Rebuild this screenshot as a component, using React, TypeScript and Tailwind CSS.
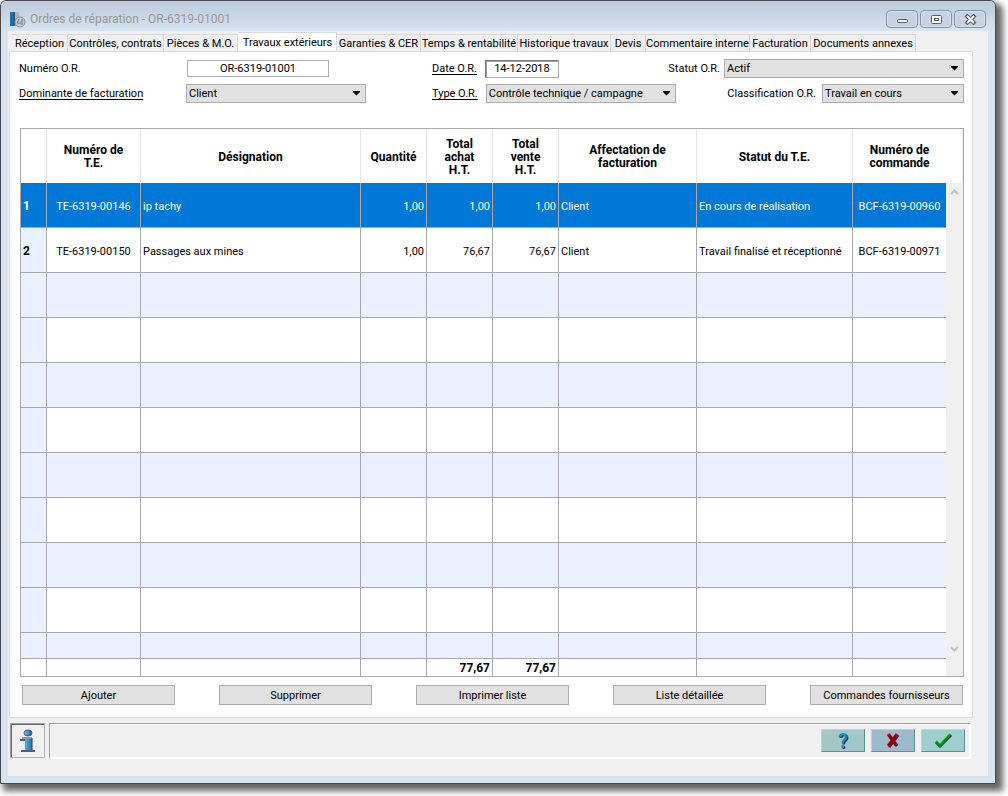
import type { ReactNode } from 'react';
import { clsx } from 'clsx';

const tabs = [
  { name: 'Réception', width: 'w-14' },
  { name: 'Contrôles, contrats', width: 'w-24' },
  { name: 'Pièces & M.O.', width: 'w-[74px]' },
  { name: 'Travaux extérieurs', width: 'w-[99px]', active: true },
  { name: 'Garanties & CER', width: 'w-[84px]' },
  { name: 'Temps & rentabilité', width: 'w-[97px]' },
  { name: 'Historique travaux', width: 'w-[93px]' },
  { name: 'Devis', width: 'w-[35px]' },
  { name: 'Commentaire interne', width: 'w-[104px]' },
  { name: 'Facturation', width: 'w-[61px]' },
  { name: 'Documents annexes', width: 'w-[105px]' },
];

const columns = [
  { label: '', width: 'w-[26px]' },
  { label: 'Numéro de T.E.', width: 'w-[94px]' },
  { label: 'Désignation', width: '' },
  { label: 'Quantité', width: 'w-[66px]' },
  { label: 'Total achat H.T.', width: 'w-[66px]' },
  { label: 'Total vente H.T.', width: 'w-[66px]' },
  { label: 'Affectation de facturation', width: 'w-[138px]' },
  { label: 'Statut du T.E.', width: 'w-[156px]' },
  { label: 'Numéro de commande', width: 'w-[93px]' },
];

const rows = [
  ['1', 'TE-6319-00146', 'ip tachy', '1,00', '1,00', '1,00', 'Client', 'En cours de réalisation', 'BCF-6319-00960'],
  ['2', 'TE-6319-00150', 'Passages aux mines', '1,00', '76,67', '76,67', 'Client', 'Travail finalisé et réceptionné', 'BCF-6319-00971'],
  ...Array.from({ length: 9 }, () => Array(9).fill('')),
];

const totals = ['', '', '', '', '77,67', '77,67', '', '', ''];

const align = [
  'text-left font-bold text-xs',
  'text-center',
  'text-left',
  'text-right',
  'text-right',
  'text-right',
  'text-left',
  'text-left',
  'text-center',
];

const actions = ['Ajouter', 'Supprimer', 'Imprimer liste', 'Liste détaillée', 'Commandes fournisseurs'];

function AppIcon() {
  return (
    <svg width="17" height="17" viewBox="0 0 17 17">
      <path d="M1 1h9l1 14H1z" fill="#a9b3bb" />
      <path d="M1 1h3v14H1z" fill="#1f6fb5" />
      <path d="M4 1h2v14H4z" fill="#3f5364" />
      <circle cx="11" cy="11" r="5" fill="#c3c9ce" stroke="#868b90" />
      <path d="M10 8l-2 4h4M13 8v6" fill="none" stroke="#72777c" />
    </svg>
  );
}

function InfoIcon() {
  return (
    <svg width="16" height="24" viewBox="0 0 16 24">
      <defs>
        <linearGradient id="info" x1="0" y1="0" x2="1" y2="0">
          <stop offset="0" stopColor="#8cc8e4" />
          <stop offset="0.5" stopColor="#3f97c9" />
          <stop offset="1" stopColor="#1b5f96" />
        </linearGradient>
      </defs>
      <ellipse cx="8" cy="4" rx="4" ry="3" fill="url(#info)" stroke="#3a4f82" />
      <path d="M1 10h11v11h3v2H1v-2h4v-9H1z" fill="url(#info)" />
      <path d="M0 11h5M1 22h14" stroke="#56598f" strokeWidth="2" />
      <path d="M2 9h10v12" fill="none" stroke="#23405f" />
    </svg>
  );
}

function CrossIcon() {
  return (
    <svg width="16" height="17" viewBox="0 0 16 17" fill="none">
      <path d="M4 3l8 11M13 3L4 15" stroke="#14147a" strokeWidth="3" />
      <path d="M3 2l8 11M12 2L3 14" stroke="#e01010" strokeWidth="3" />
      <path d="M4 3l7 10M12 3L4 14" stroke="#8f0000" strokeWidth="3" />
    </svg>
  );
}

function CheckIcon() {
  return (
    <svg width="18" height="17" viewBox="0 0 18 17" fill="none">
      <path d="M2 10l4 4L17 3" stroke="#10107a" strokeWidth="3" />
      <path d="M2 9l4 4L16 2" stroke="#12d012" strokeWidth="2" />
      <path d="M2 10l4 4L16 3" stroke="#009600" strokeWidth="2" />
    </svg>
  );
}

function WindowButton({ label, children }: { label: string; children: ReactNode }) {
  return (
    <button aria-label={label} className="flex h-[18px] w-8 items-center justify-center rounded-sm border border-[#8593ab] bg-[#c5d3e2] shadow-[inset_0_0_0_1px_#d5e0ec]">
      <svg width="13" height="11" viewBox="0 0 13 11" fill="none">
        {children}
      </svg>
    </button>
  );
}

function Select({ id, value, className }: { id: string; value: string; className: string }) {
  return (
    <div className={clsx('relative h-[19px]', className)}>
      <select id={id} defaultValue={value} className="h-full w-full appearance-none border border-[#adadad] bg-[#e1e1e1] pl-0.5 pr-5">
        <option>{value}</option>
      </select>
      <svg className="pointer-events-none absolute right-[5px] top-[7px]" width="9" height="5" viewBox="0 0 9 5">
        <path d="M1 0h7v1L4.500 4.500L1 1z" fill="#000" />
      </svg>
    </div>
  );
}

function Field({ id, label, underline, className, children }: {
  id: string;
  label: string;
  underline?: boolean;
  className?: string;
  children: ReactNode;
}) {
  return (
    <div className={clsx('flex h-[19px] items-center', className)}>
      <label htmlFor={id} className={clsx('whitespace-nowrap', underline && 'underline underline-offset-2')}>{label}</label>
      {children}
    </div>
  );
}

function OrderForm() {
  return (
    <div className="grid grid-cols-[347px_1fr_240px] gap-y-1.5 pl-[9px]">
      <Field id="numero" label="Numéro O.R." className="justify-between pr-[37px]">
        <input id="numero" defaultValue="OR-6319-01001" className="h-[17px] w-[142px] border border-[#adadad] bg-white text-center" />
      </Field>
      <div className="flex justify-between">
        <Field id="date" label="Date O.R." underline className="gap-2 pl-[66px]">
          <input id="date" defaultValue="14-12-2018" className="h-[18px] w-[74px] border border-[#adadad] border-l-[#7a7a7a] border-t-[#7a7a7a] bg-white text-center shadow-[inset_1px_1px_0_#a0a0a0]" />
        </Field>
        <label htmlFor="statut" className="flex items-center pr-1">Statut O.R.</label>
      </div>
      <Select id="statut" value="Actif" className="w-full" />
      <Field id="dominante" label="Dominante de facturation" underline className="justify-between">
        <Select id="dominante" value="Client" className="w-[180px]" />
      </Field>
      <Field id="type" label="Type O.R." underline className="gap-2 pl-[66px]">
        <Select id="type" value="Contrôle technique / campagne" className="w-[190px]" />
      </Field>
      <Field id="classification" label="Classification O.R." className="justify-end gap-1.5">
        <Select id="classification" value="Travail en cours" className="w-[142px]" />
      </Field>
    </div>
  );
}

function WorksTable() {
  return (
    <div className="ml-2.5 flex border border-[#a9a9ad] bg-white">
      <div className="min-w-0 flex-1">
        <table className="w-full table-fixed border-separate border-spacing-0">
          <thead>
            <tr className="h-[54px]">
              {columns.map((col, i) => (
                <th
                  key={i}
                  className={clsx('border-[#e3e3e3] px-2 pt-0.5 pb-0 text-xs leading-[13px] font-bold', col.width, i < 8 && 'border-r')}
                >
                  {col.label}
                </th>
              ))}
            </tr>
          </thead>
          <tbody>
            {rows.map((row, r) => (
              <tr
                key={r}
                className={clsx(
                  r === 10 ? 'h-[26px]' : 'h-[45px]',
                  r === 0 && 'bg-[#0078d7] text-white',
                  r > 0 && r % 2 === 0 && 'bg-[#eaf1fe]',
                )}
              >
                {row.map((cell, i) => (
                  <td
                    key={i}
                    className={clsx(
                      'border-b border-[#a9a9ad] px-0.5 pt-0.5 pb-0 whitespace-nowrap',
                      align[i],
                      i < 8 && 'border-r',
                      i === 0 && r > 0 && 'bg-[#eaf1fe]',
                    )}
                  >
                    {cell}
                  </td>
                ))}
              </tr>
            ))}
          </tbody>
          <tfoot>
            <tr className="h-[17px]">
              {totals.map((total, i) => (
                <td key={i} className={clsx('border-[#a9a9ad] px-0.5 py-0 text-right text-xs leading-4 font-bold', i < 8 && 'border-r')}>
                  {total}
                </td>
              ))}
            </tr>
          </tfoot>
        </table>
      </div>
      <div className="flex w-[17px] flex-col">
        <div className="h-[54px] border-r border-[#e3e3e3]" />
        <div className="flex flex-1 flex-col items-center justify-between bg-[#f0f0f0] pt-1.5 pb-6">
          <svg width="9" height="6" viewBox="0 0 9 6" fill="none" stroke="#bfbfbf" strokeWidth="2">
            <path d="M1 5l3.500-3.500L8 5" />
          </svg>
          <svg width="9" height="6" viewBox="0 0 9 6" fill="none" stroke="#bfbfbf" strokeWidth="2">
            <path d="M1 1l3.500 3.500L8 1" />
          </svg>
        </div>
      </div>
    </div>
  );
}

function StatusBar() {
  const button = 'flex h-[23px] w-11 items-center justify-center border border-r-[#5f8f8f] border-b-[#5f8f8f]';
  return (
    <div className="mt-[5px] flex gap-1 pr-0.5 pl-px">
      <button aria-label="Informations" className="flex h-[35px] w-[35px] items-center justify-center border border-[#b5b5b5] border-t-[#9a9a9a] border-l-[#9a9a9a] shadow-[inset_1px_1px_0_#6a6a6a]">
        <InfoIcon />
      </button>
      <div className="flex h-9 flex-1 items-center justify-end gap-1.5 border border-r-2 border-b-2 border-white border-t-[#a0a0a0] border-l-[#a0a0a0] pr-1 shadow-[inset_1px_1px_0_#fff]">
        <button aria-label="Aide" className={clsx(button, 'border-t-[#bcd9c8] border-l-[#bcd9c8] bg-[#a3c7c8] text-xl font-bold text-[#00a0a8] [text-shadow:1px_1px_0_#10107a]')}>
          ?
        </button>
        <button aria-label="Annuler" className={clsx(button, 'border-t-[#bcd0c8] border-l-[#bcd0c8] bg-[#9dbacd]')}>
          <CrossIcon />
        </button>
        <button aria-label="Valider" className={clsx(button, 'border-t-[#bcdcc8] border-l-[#bcdcc8] bg-[#9ccfcd]')}>
          <CheckIcon />
        </button>
      </div>
    </div>
  );
}

export default function App() {
  return (
    <div className="min-h-screen bg-white pr-3 pb-3 font-[Roboto,sans-serif] text-[11px] leading-[13px] text-black">
      <div className="rounded-t-md border border-[#4a484e] bg-[#d7e4f2] px-[7px] pb-[7px] shadow-[5px_5px_6px_2px_rgba(0,0,0,0.6)]">
        <header className="-mx-[7px] flex h-[30px] items-center justify-between rounded-t-md bg-linear-to-b from-[#bccad9] to-[#d7e4f2] pt-1.5 pr-[9px] pl-2">
          <div className="flex items-center gap-1">
            <AppIcon />
            <h1 className="text-xs leading-4 text-[#979797]">Ordres de réparation - OR-6319-01001</h1>
          </div>
          <div className="flex gap-0.5">
            <WindowButton label="Réduire">
              <rect x="1.500" y="5.500" width="10" height="3" rx="1" fill="#fff" stroke="#555c6b" />
            </WindowButton>
            <WindowButton label="Agrandir">
              <rect x="1.500" y="1.500" width="10" height="8" rx="1" fill="#fff" stroke="#555c6b" />
              <rect x="4.500" y="4.500" width="4" height="2" stroke="#555c6b" />
            </WindowButton>
            <WindowButton label="Fermer">
              <path d="M2 1l9 9M11 1l-9 9" stroke="#555c6b" strokeWidth="4" />
              <path d="M3 2l7 7M10 2l-7 7" stroke="#fff" strokeWidth="2" />
            </WindowButton>
          </div>
        </header>

        <main className="bg-[#f0f0f0] pt-px pr-[15px] pb-[17px] pl-px">
          <nav className="flex h-[19px] items-end pl-[3px]" role="tablist">
            {tabs.map((tab) => (
              <button
                key={tab.name}
                role="tab"
                aria-selected={!!tab.active}
                className={clsx(
                  'flex shrink-0 items-center justify-center border-t border-r border-[#d9d9d9] whitespace-nowrap',
                  tab.width,
                  tab.active ? 'h-[19px] bg-white pl-px' : 'h-[17px]',
                )}
              >
                {tab.name}
              </button>
            ))}
          </nav>
          <section className="border border-[#d9d9d9] bg-white pt-[7px] pr-2 pb-3">
            <OrderForm />
            <div className="mt-[25px]">
              <WorksTable />
            </div>
            <div className="mt-2 flex justify-between pr-px pl-3">
              {actions.map((action) => (
                <button key={action} className="h-5 w-[153px] border border-[#adadad] bg-[#e1e1e1]">
                  {action}
                </button>
              ))}
            </div>
          </section>
          <StatusBar />
        </main>
      </div>
    </div>
  );
}
